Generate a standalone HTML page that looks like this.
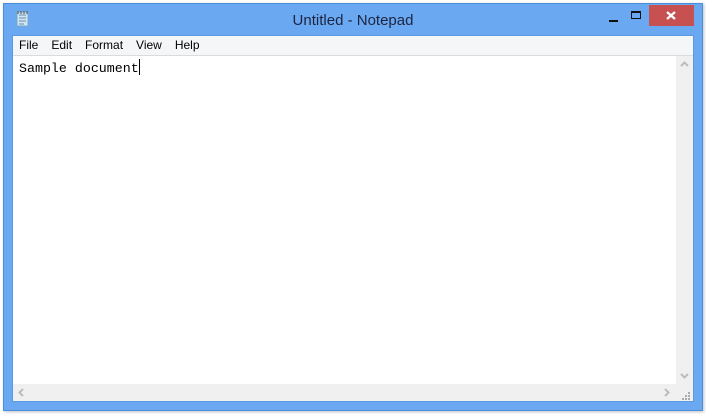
<!DOCTYPE html>
<html><head><style>
*{margin:0;padding:0;box-sizing:border-box}
body{width:706px;height:414px;background:#fff;position:relative;overflow:hidden;font-family:"Liberation Sans",sans-serif}
.win{position:absolute;left:3px;top:3px;width:700px;height:408px;background:#6aa9f2;border:1px solid #4b8fdc;box-shadow:1px 1px 3px rgba(0,0,0,.25)}
.title{position:absolute;left:0;right:0;top:8px;text-align:center;font-size:15px;color:#1e2440}
.close{position:absolute;left:645px;top:1px;width:45px;height:21px;background:#c75050}
.min{position:absolute;left:605px;top:16px;width:9px;height:2px;background:#111}
.max{position:absolute;left:627px;top:7px;width:10px;height:8px;border:1px solid #111;border-top-width:2px}
.client{position:absolute;left:8px;top:31px;width:682px;height:367px;background:#fff;border:1px solid #5b9ae0}
.menu{height:20px;background:#f5f6f7;border-bottom:1px solid #d8dbe0;font-size:12px;color:#000;padding-left:6px;line-height:19px}
.menu span{margin-right:13px}
.text{position:absolute;left:6px;top:23px;font-family:"Liberation Mono",monospace;font-size:13.3px;color:#000}
.caret{display:inline-block;width:1px;height:16px;background:#000;vertical-align:-3px}
.vs{position:absolute;right:0;top:20px;width:17px;height:328px;background:#f0f0f0}
.hs{position:absolute;left:0;bottom:0;right:17px;height:17px;background:#f0f0f0}
.corner{position:absolute;right:0;bottom:0;width:17px;height:17px;background:#f0f0f0}
svg.a{position:absolute}
</style></head><body>
<div class="win">
<svg style="position:absolute;left:12px;top:6px" width="14" height="17"><rect x="1" y="2" width="11" height="14" fill="#cfe6f5" stroke="#7aa8c8"/><path d="M3 5h7M3 8h7M3 11h7M3 14h5" stroke="#6b8fb0"/><path d="M2 1v3M5 1v3M8 1v3M11 1v3" stroke="#555"/></svg>
<div class="title">Untitled - Notepad</div>
<div class="min"></div><div class="max"></div>
<div class="close"><svg width="45" height="21"><path d="M18 7l8 7M26 7l-8 7" stroke="#fff" stroke-width="2.2"/></svg></div>
<div class="client">
<div class="menu"><span>File</span><span>Edit</span><span>Format</span><span>View</span><span>Help</span></div>
<div class="text">Sample document<span class="caret"></span></div>
<div class="vs"><svg class="a" style="left:4px;top:5px" width="9" height="6"><path d="M1 5l3.5-3.5L8 5" stroke="#bbb" stroke-width="2" fill="none"/></svg><svg class="a" style="left:4px;bottom:5px" width="9" height="6"><path d="M1 1l3.5 3.5L8 1" stroke="#bbb" stroke-width="2" fill="none"/></svg></div>
<div class="hs"><svg class="a" style="left:5px;top:4px" width="6" height="9"><path d="M5 1L1.5 4.5 5 8" stroke="#bbb" stroke-width="2" fill="none"/></svg><svg class="a" style="right:6px;top:4px" width="6" height="9"><path d="M1 1l3.5 3.5L1 8" stroke="#bbb" stroke-width="2" fill="none"/></svg></div>
<div class="corner"><svg width="17" height="17"><path d="M12 8h2v2h-2zM9 11h2v2H9zM12 11h2v2h-2zM6 14h2v2H6zM9 14h2v2H9zM12 14h2v2h-2z" fill="#aaa"/></svg></div>
</div>
</div>
</body></html>
